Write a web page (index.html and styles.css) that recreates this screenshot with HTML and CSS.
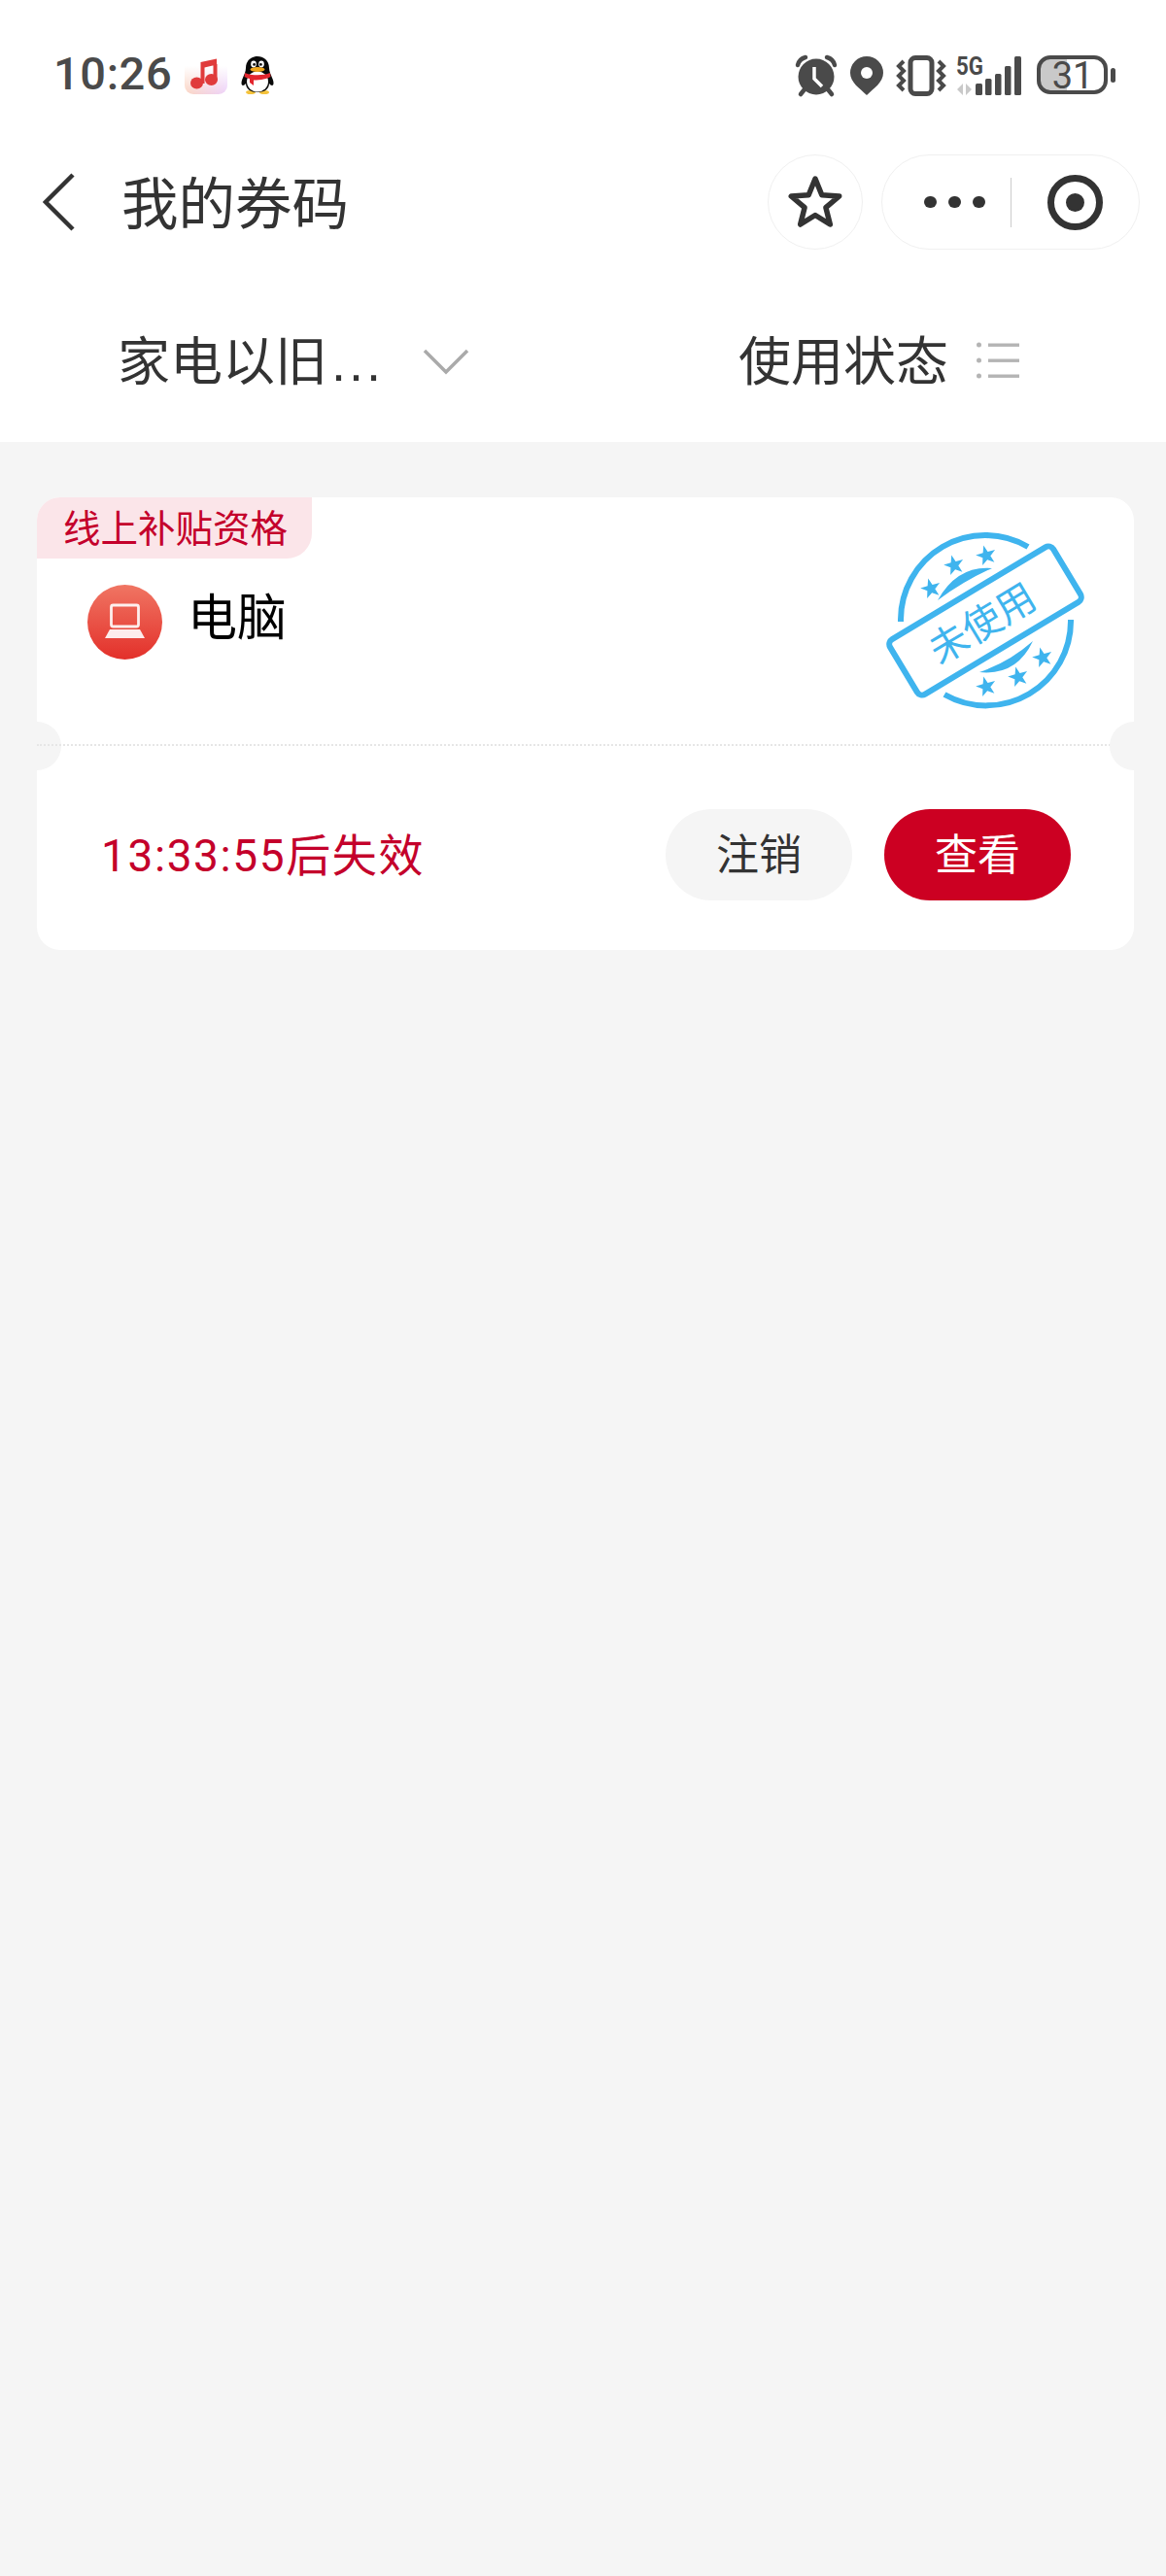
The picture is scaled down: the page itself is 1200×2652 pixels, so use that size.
FILE: index.html
```html
<!DOCTYPE html>
<html lang="zh-CN">
<head>
    <meta charset="UTF-8">
    <meta name="viewport" content="width=device-width, initial-scale=1.0">
    <title>我的券码</title>
    <link rel="stylesheet" href="styles.css">
</head>
<body>
    <header class="top">
        <div class="status-bar">
            <div class="status-left">
                <span class="clock">10:26</span>
                <svg class="music-icon" viewBox="0 0 46 42">
                    <defs>
                        <linearGradient id="music-bg" x1="0" x2="1" y1="0" y2="0">
                            <stop offset="0" stop-color="#fbd3c0"/>
                            <stop offset="1" stop-color="#ecd0fa"/>
                        </linearGradient>
                        <linearGradient id="music-fade" x1="0" x2="0" y1="0" y2="1">
                            <stop offset="0.3" stop-color="#fff"/>
                            <stop offset="1" stop-color="#fff" stop-opacity="0"/>
                        </linearGradient>
                    </defs>
                    <rect x="1" y="0" width="44" height="41" rx="9" fill="url(#music-bg)"/>
                    <rect x="0" y="-1" width="46" height="43" fill="url(#music-fade)"/>
                    <path d="M17.5 8 L34 4.5 V10.5 L21.5 13.5 V30 H17.5 Z M30.5 10 H34.5 V26 H30.5 Z" fill="#e03b3b"/>
                    <ellipse cx="13.5" cy="29.5" rx="6.5" ry="6" fill="#e03b3b"/>
                    <ellipse cx="28.5" cy="26" rx="6.5" ry="6" fill="#e03b3b"/>
                </svg>
                <svg class="qq-icon" viewBox="0 0 36 40">
                    <ellipse cx="11" cy="38" rx="5" ry="2" fill="#f5c33b"/>
                    <ellipse cx="25" cy="38" rx="5" ry="2" fill="#f5c33b"/>
                    <path d="M6 13 C6 -3 30 -3 30 13 C30 17 32 20 33 23 C35 27 35 31 33 31 C32 31 31 30 30 29 C30 34 26 38 18 38 C10 38 6 34 6 29 C5 30 4 31 3 31 C1 31 1 27 3 23 C4 20 6 17 6 13 Z" fill="#0a0a0a"/>
                    <ellipse cx="18" cy="27" rx="11" ry="10.5" fill="#fff"/>
                    <ellipse cx="14" cy="9" rx="2.8" ry="3.4" fill="#fff"/>
                    <ellipse cx="22" cy="9" rx="2.8" ry="3.4" fill="#fff"/>
                    <circle cx="14.6" cy="9.4" r="1.4" fill="#111"/>
                    <circle cx="21.4" cy="9.4" r="1.4" fill="#111"/>
                    <ellipse cx="18" cy="14.5" rx="7.5" ry="2.6" fill="#f2a81d"/>
                    <path d="M5 18 C12 21 24 21 31 18 L31.5 22 C28 24 25 24.5 22 25 C18 25.5 15 25.5 14 25.5 V31 L10 28 V24 C8 23.5 6 23 4.5 22 Z" fill="#e3262e"/>
                </svg>
            </div>
            <svg class="status-right" viewBox="815 50 335 52">
                <!-- alarm -->
                <g fill="#4a4a4a" stroke="#4a4a4a">
                    <circle cx="840" cy="78" r="18.5" stroke="none"/>
                    <path d="M821 66 C822 62 825 59 829 58 M859 66 C858 62 855 59 851 58 M824 96 L828 91 M856 96 L852 91" fill="none" stroke-width="4.5" stroke-linecap="round"/>
                    <path d="M838 68 V80 L846 88" fill="none" stroke="#fff" stroke-width="3.5"/>
                </g>
                <!-- location -->
                <path d="M892 97 C885 90 875 84 875 74 A17 17 0 1 1 909 74 C909 84 899 90 892 97 Z" fill="#4a4a4a"/>
                <circle cx="892" cy="74" r="6" fill="#fff"/>
                <!-- vibrate -->
                <rect x="937" y="58.5" width="22" height="37" rx="5" fill="none" stroke="#4a4a4a" stroke-width="5"/>
                <path d="M930 62 L925 67 L930 72 L925 77 L930 82 L925 87 L930 92 M966 62 L971 67 L966 72 L971 77 L966 82 L971 87 L966 92" fill="none" stroke="#4a4a4a" stroke-width="4"/>
                <!-- signal -->
                <text class="net-label" x="984" y="76" textLength="28" lengthAdjust="spacingAndGlyphs">5G</text>
                <path d="M991 85 V97 L985 91 Z M994 85 V97 L1000 91 Z" fill="#c9c9c9"/>
                <g fill="#4a4a4a">
                    <rect x="1004" y="85" width="7" height="12" rx="1.5"/>
                    <rect x="1014" y="80" width="6.5" height="17" rx="1.5"/>
                    <rect x="1024" y="75" width="6.5" height="22" rx="1.5"/>
                    <rect x="1034" y="67" width="6.5" height="30" rx="1.5"/>
                    <rect x="1044" y="57" width="7" height="40" rx="1.5"/>
                </g>
                <!-- battery -->
                <path d="M1098 58 H1081 A12 12 0 0 0 1069 70 V82 A12 12 0 0 0 1081 94 H1098 Z" fill="#c9c9c9"/>
                <rect x="1069" y="58" width="69" height="36" rx="12" fill="none" stroke="#4a4a4a" stroke-width="4"/>
                <rect x="1143" y="69" width="5" height="15" rx="2.5" fill="#4a4a4a"/>
                <text class="battery-label" x="1104" y="90" text-anchor="middle">31</text>
            </svg>
        </div>
        <nav class="nav-bar">
            <svg class="back-icon" viewBox="0 0 34 60">
                <path d="M31 2 L3 30 L31 58" fill="none" stroke="#333" stroke-width="4.5"/>
            </svg>
            <h1 class="page-title">我的券码</h1>
            <div class="nav-actions">
                <div class="fav-btn">
                    <svg class="fav-icon" viewBox="0 0 98 98">
                        <path d="M49 25 L55.8 41.7 L73.7 43 L59.9 54.6 L64.3 72 L49 62.5 L33.7 72 L38.1 54.6 L24.3 43 L42.2 41.7 Z" fill="none" stroke="#333" stroke-width="5.5" stroke-linejoin="round"/>
                    </svg>
                </div>
                <div class="capsule">
                    <div class="capsule-dots"><i></i><i></i><i></i></div>
                    <div class="capsule-line"></div>
                    <div class="capsule-target"><i></i></div>
                </div>
            </div>
        </nav>
        <div class="filters">
            <div class="filter filter-type">
                <span class="filter-text">家电以旧<span class="dots">...</span></span>
                <svg class="chevron-icon" viewBox="0 0 48 27">
                    <path d="M2 2 L24 24 L46 2" fill="none" stroke="#aaa" stroke-width="3.5"/>
                </svg>
            </div>
            <div class="filter filter-state">
                <span class="filter-text">使用状态</span>
                <svg class="list-icon" viewBox="0 0 44 38">
                    <g fill="#b4b4b4">
                        <circle cx="2.5" cy="3" r="2.5"/>
                        <circle cx="2.5" cy="19" r="2.5"/>
                        <circle cx="2.5" cy="35" r="2.5"/>
                        <rect x="12" y="1.5" width="32" height="3.4"/>
                        <rect x="12" y="17.5" width="32" height="3.4"/>
                        <rect x="12" y="33.5" width="32" height="3.4"/>
                    </g>
                </svg>
            </div>
        </div>
    </header>

    <main class="list">
        <section class="coupon">
            <div class="coupon-main">
                <div class="coupon-tag">线上补贴资格</div>
                <div class="coupon-product">
                    <div class="product-icon">
                        <svg viewBox="0 0 77 77">
                            <rect x="24.5" y="21" width="28" height="22" rx="2" fill="none" stroke="#fff" stroke-width="2.8" opacity="0.9"/>
                            <path d="M23 46 H54 L59 55 H18 Z" fill="#fff" opacity="0.9"/>
                        </svg>
                    </div>
                    <span class="product-name">电脑</span>
                </div>
                <svg class="stamp" viewBox="0 0 280 220">
                    <defs>
                        <path id="stamp-star" d="M0 -9 L2.12 -2.91 L8.56 -2.78 L3.42 1.11 L5.29 7.28 L0 3.6 L-5.29 7.28 L-3.42 1.11 L-8.56 -2.78 L-2.12 -2.91 Z"/>
                    </defs>
                    <g fill="none" stroke="#3fb4ee" stroke-width="6">
                        <path d="M47 120 A87 87 0 0 1 178 43"/>
                        <path d="M222 118 A87 87 0 0 1 92 195"/>
                        <rect x="36" y="86" width="196" height="66" rx="6" transform="rotate(-31 134 119)"/>
                    </g>
                    <g fill="#3fb4ee">
                        <path d="M85 98 Q105 62 141 65 Q112 78 85 98 Z"/>
                        <path d="M183 140 Q166 176 128 172 Q158 162 183 140 Z"/>
                        <use href="#stamp-star" transform="translate(78 86) rotate(-15) scale(1.2)"/>
                        <use href="#stamp-star" transform="translate(102 62) rotate(-15) scale(1.2)"/>
                        <use href="#stamp-star" transform="translate(135 52) rotate(-15) scale(1.2)"/>
                        <use href="#stamp-star" transform="translate(135 187) rotate(-15) scale(1.2)"/>
                        <use href="#stamp-star" transform="translate(168 177) rotate(-15) scale(1.2)"/>
                        <use href="#stamp-star" transform="translate(193 157) rotate(-15) scale(1.2)"/>
                        <text class="stamp-label" x="131" y="136" text-anchor="middle" transform="rotate(-31 131 122)">未使用</text>
                    </g>
                </svg>
            </div>
            <div class="coupon-foot">
                <span class="countdown">13:33:55后失效</span>
                <div class="coupon-btns">
                    <button class="btn btn-cancel">注销</button>
                    <button class="btn btn-view">查看</button>
                </div>
            </div>
        </section>
    </main>
</body>
</html>
```

FILE: styles.css
```css
* {
    box-sizing: border-box;
}
body {
    margin: 0;
    min-height: 2652px;
    background-color: #f5f5f5;
    font-family: Roboto, "Noto Sans CJK SC", sans-serif;
    color: #333;
}
.top {
    height: 455px;
    background-color: #fff;
}

/* status bar */
.status-bar {
    height: 154px;
    display: flex;
    justify-content: space-between;
    align-items: center;
    padding: 0 50px 0 55px;
}
.status-left {
    display: flex;
    align-items: center;
}
.clock {
    font-size: 47px;
    font-weight: 500;
    letter-spacing: 0.6px;
    color: #4a4a4a;
    padding-bottom: 3px;
}
.music-icon {
    width: 46px;
    height: 42px;
    margin-left: 12px;
}
.qq-icon {
    width: 36px;
    height: 40px;
    margin-left: 12px;
}
.status-right {
    width: 335px;
    height: 52px;
}
.net-label {
    font-size: 26px;
    font-weight: 700;
    fill: #4a4a4a;
}
.battery-label {
    font-size: 38px;
    fill: #4a4a4a;
}

/* nav */
.nav-bar {
    height: 108px;
    display: flex;
    align-items: center;
    padding: 0 27px 0 44px;
}
.back-icon {
    width: 34px;
    height: 60px;
}
.page-title {
    margin: 0 0 0 47px;
    padding-bottom: 6px;
    font-size: 58.5px;
    font-weight: 400;
}
.nav-actions {
    margin-left: auto;
    display: flex;
    gap: 19px;
}
.fav-btn {
    width: 98px;
    height: 98px;
    border: 1px solid #f0f0f0;
    border-radius: 50%;
}
.fav-icon {
    display: block;
    margin: -1px;
    width: 98px;
    height: 98px;
}
.capsule {
    width: 266px;
    height: 98px;
    border: 1px solid #f0f0f0;
    border-radius: 49px;
    display: flex;
    align-items: center;
    padding-left: 43px;
}
.capsule-dots {
    display: flex;
    gap: 12.5px;
}
.capsule-dots i {
    width: 12.5px;
    height: 12.5px;
    border-radius: 50%;
    background-color: #333;
}
.capsule-line {
    width: 1px;
    height: 51px;
    margin-left: 26px;
    background-color: #ccc;
}
.capsule-target {
    width: 57px;
    height: 57px;
    margin-left: 37px;
    border: 7px solid #333;
    border-radius: 50%;
    display: flex;
    align-items: center;
    justify-content: center;
}
.capsule-target i {
    width: 19px;
    height: 19px;
    border-radius: 50%;
    background-color: #333;
}

/* filters */
.filters {
    margin-top: 25px;
    height: 168px;
    display: grid;
    grid-template-columns: 600px 600px;
    font-size: 54px;
}
.filter {
    display: flex;
    align-items: center;
}
.filter-text {
    padding-bottom: 6px;
}
.filter-type {
    padding-left: 121px;
}
.filter-state {
    padding-left: 160px;
}
.dots {
    letter-spacing: 3px;
    font-family: "Liberation Sans", sans-serif;
    margin-left: 4px;
}
.chevron-icon {
    width: 48px;
    height: 27px;
    margin-left: 40px;
    margin-top: 2px;
}
.list-icon {
    width: 44px;
    height: 38px;
    margin-left: 29px;
}

/* coupon card */
.list {
    padding: 57px 33px 0 38px;
}
.coupon {
    position: relative;
    height: 466px;
    background-color: #fff;
    border-radius: 24px;
    overflow: hidden;
}
.coupon::before,
.coupon::after {
    content: "";
    position: absolute;
    top: 231px;
    width: 50px;
    height: 50px;
    border-radius: 50%;
    background-color: #f5f5f5;
}
.coupon::before {
    left: -25px;
}
.coupon::after {
    right: -25px;
}
.coupon-main {
    position: relative;
    height: 256px;
    border-bottom: 2px dotted #e6e6e6;
}
.coupon-tag {
    width: 283px;
    height: 63px;
    padding-left: 27px;
    background-color: #fbe5e9;
    border-bottom-right-radius: 26px;
    font-size: 38.5px;
    line-height: 65px;
    color: #c4002b;
}
.coupon-product {
    display: flex;
    align-items: center;
    margin-top: 27px;
    padding-left: 52px;
}
.product-icon {
    width: 77px;
    height: 77px;
    border-radius: 50%;
    background: linear-gradient(#f07563, #e3302a);
}
.product-icon svg {
    display: block;
}
.product-name {
    margin-left: 26px;
    padding-bottom: 8px;
    font-size: 51px;
    line-height: 1;
    color: #000;
}
.stamp {
    position: absolute;
    left: 842px;
    top: 8px;
    width: 280px;
    height: 220px;
}
.stamp-label {
    font-size: 40px;
    font-family: "Noto Sans CJK SC", sans-serif;
}
.coupon-foot {
    display: flex;
    justify-content: space-between;
    align-items: center;
    padding: 65px 65px 0 66px;
}
.countdown {
    padding-bottom: 6px;
    font-size: 46px;
    letter-spacing: 1.6px;
    color: #c4002b;
}
.coupon-btns {
    display: flex;
    gap: 33px;
}
.btn {
    width: 192px;
    height: 94px;
    border: none;
    border-radius: 47px;
    padding: 0 0 6px;
    font-family: inherit;
    font-size: 44px;
}
.btn-cancel {
    background-color: #f5f5f5;
    color: #333;
}
.btn-view {
    background-color: #cc0022;
    color: #fff;
}
```
